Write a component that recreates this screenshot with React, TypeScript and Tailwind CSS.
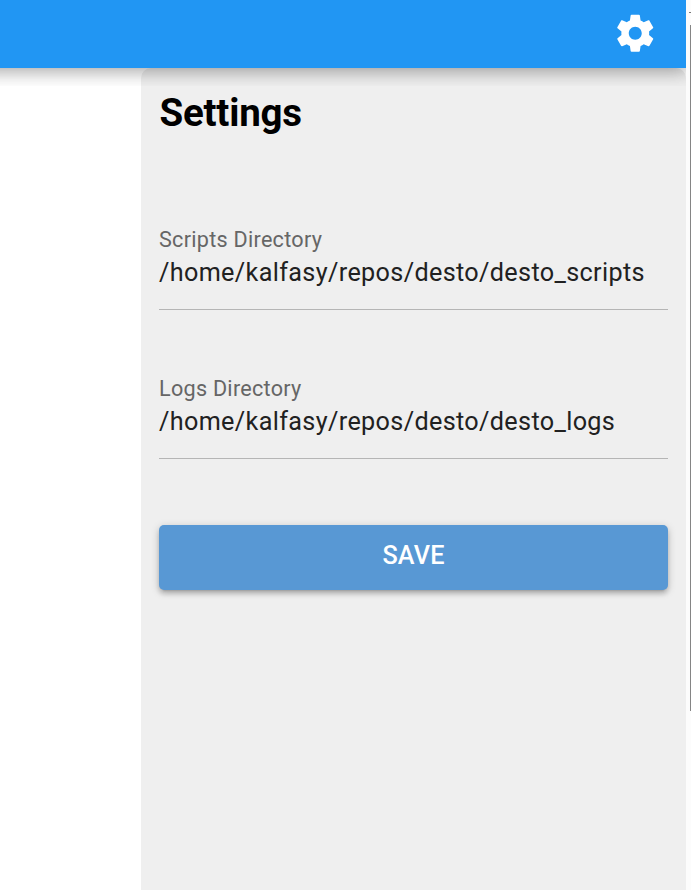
function Gear() {
  return (
    <svg viewBox="0 0 24 24" fill="currentColor" className="-mt-[2px] size-[44.5px]" aria-hidden="true">
      <path d="M19.43 12.98c.04-.32.07-.64.07-.98s-.03-.66-.07-.98l2.11-1.65c.19-.15.24-.42.12-.64l-2-3.46c-.12-.22-.39-.3-.61-.22l-2.49 1c-.52-.4-1.08-.73-1.69-.98l-.38-2.65C14.46 2.18 14.25 2 14 2h-4c-.25 0-.46.18-.49.42l-.38 2.65c-.61.25-1.17.59-1.69.98l-2.49-1c-.23-.09-.49 0-.61.22l-2 3.46c-.13.22-.07.49.12.64l2.11 1.65c-.04.32-.07.65-.07.98s.03.66.07.98l-2.11 1.65c-.19.15-.24.42-.12.64l2 3.46c.12.22.39.3.61.22l2.49-1c.52.4 1.08.73 1.69.98l.38 2.65c.03.24.24.42.49.42h4c.25 0 .46-.18.49-.42l.38-2.65c.61-.25 1.17-.59 1.69-.98l2.49 1c.23.09.49 0 .61-.22l2-3.46c.12-.22.07-.49-.12-.64l-2.11-1.65zM12 15.5c-1.93 0-3.5-1.57-3.5-3.5s1.57-3.5 3.5-3.5 3.5 1.57 3.5 3.5-1.57 3.5-3.5 3.5z" />
    </svg>
  );
}

function Field({ label, value }: { label: string; value: string }) {
  return (
    <label className="flex h-[101px] flex-col border-b border-[#b5b5b5]">
      <span className="mt-[18px] h-[26px] whitespace-nowrap text-[21.6px] leading-[26px] tracking-[0.27px] text-[#666666]">
        {label}
      </span>
      <span className="mt-[4px] h-[32px] whitespace-nowrap text-[25.2px] leading-[32px] tracking-[0.35px] text-[#212121]">
        {value}
      </span>
    </label>
  );
}

export default function App() {
  return (
    <div className="flex h-[890px] w-[691px] overflow-hidden bg-[#fcfcfc] font-[Roboto,sans-serif]">
      <div className="flex w-[686px] flex-col bg-white">
        <div className="relative z-10 -mb-[18px] h-[86px] shrink-0 overflow-hidden">
          <header className="-ml-[30px] flex h-[68px] items-center justify-end bg-[#2196f3] pr-[29px] text-white shadow-[0_0_18px_4px_rgba(0,0,0,0.2),0_0_18px_rgba(0,0,0,0.24)]">
            <Gear />
          </header>
        </div>
        <aside className="ml-[141px] flex flex-1 flex-col rounded-t-[10px] bg-[#efefef] px-[18px]">
          <h1 className="mt-[22px] h-[46px] pl-[0.4px] text-[38.5px] font-bold leading-[46px] tracking-[-0.2px] text-black">
            Settings
          </h1>
          <div className="mt-[73px] flex flex-col gap-[48px]">
            <Field label="Scripts Directory" value="/home/kalfasy/repos/desto/desto_scripts" />
            <Field label="Logs Directory" value="/home/kalfasy/repos/desto/desto_logs" />
          </div>
          <button className="mt-[66px] h-[65px] rounded-[5px] bg-[#5898d4] pb-[4px] text-[25.2px] font-medium tracking-[0.2px] text-white shadow-[0_2px_9px_rgba(0,0,0,0.2),0_4px_4px_rgba(0,0,0,0.14),0_5px_2px_-4px_rgba(0,0,0,0.12)]">
            SAVE
          </button>
        </aside>
      </div>
      <div className="flex w-[5px] flex-col items-end">
        <div className="mt-[12px] h-px w-[2px] bg-[#777777]" />
        <div className="mt-[12px] h-[686px] w-px bg-[#858585]" />
      </div>
    </div>
  );
}
